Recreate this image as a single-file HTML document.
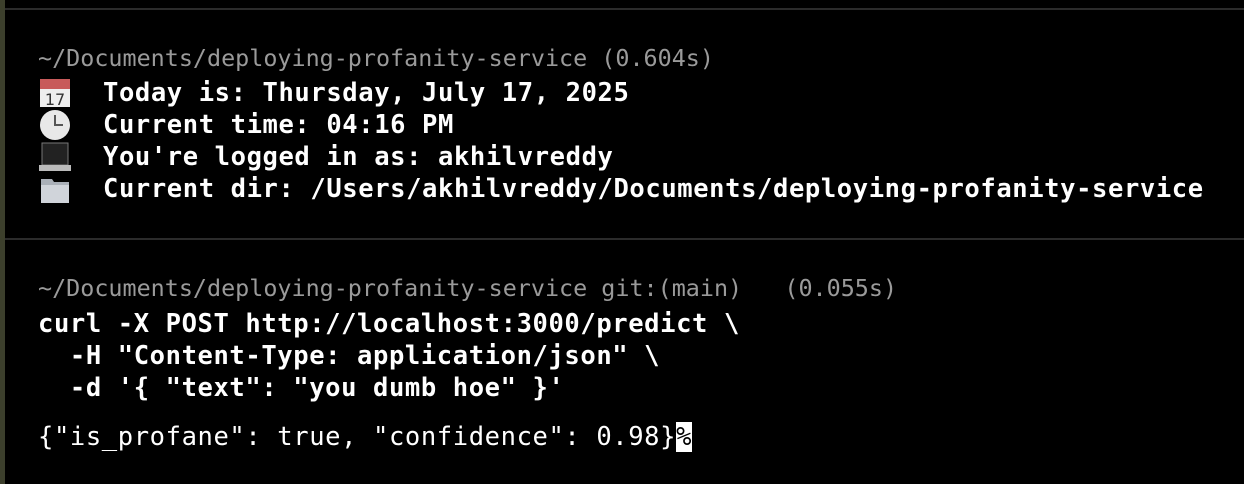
<!DOCTYPE html>
<html><head><style>
html,body{margin:0;padding:0;width:1244px;height:484px;background:#000;overflow:hidden}
.strip{position:absolute;left:0;top:0;width:5px;height:484px;background:#3c3f2c}
.hl{position:absolute;left:5px;right:0;height:2px;background:#2b2b2b}
.t{position:absolute;left:38px;font-family:"DejaVu Sans Mono","Liberation Mono",monospace;font-size:23.4px;line-height:32px;white-space:pre;color:#fff}
.w{font-size:25.5px;letter-spacing:0.6px}
.g{color:#9a9a9a}
.b{font-weight:bold}
.e{position:absolute;left:38px;width:34px;height:30px;font-size:26px;line-height:30px;text-align:center}
.cur{background:#fff;color:#000;letter-spacing:0;display:inline-block;width:16px;line-height:30px}
</style></head><body>
<div class="strip"></div>
<div class="hl" style="top:8px"></div>
<div class="hl" style="top:238px"></div>
<div class="t g" style="top:42px">~/Documents/deploying-profanity-service (0.604s)</div>
<div class="e" style="top:77px"><svg width="34" height="32"><rect x="2" y="2" width="30" height="28" fill="#eee"/><rect x="2" y="2" width="30" height="10" fill="#c85b5b"/><text x="17" y="28" font-family="DejaVu Sans" font-size="16" text-anchor="middle" fill="#333">17</text></svg></div>
<div class="e" style="top:109px"><svg width="34" height="32"><circle cx="17" cy="16" r="15" fill="#e8e8e8"/><path d="M17 6V16H25" stroke="#555" stroke-width="2" fill="none"/></svg></div>
<div class="e" style="top:141px"><svg width="34" height="32"><rect x="4" y="2" width="26" height="22" fill="#222" stroke="#777"/><rect x="1" y="24" width="32" height="6" fill="#bbb"/></svg></div>
<div class="e" style="top:173px"><svg width="34" height="32"><path d="M3 6H14L16 9H31V30H3Z" fill="#aab0b8"/><path d="M3 12H31V30H3Z" fill="#d0d4da"/></svg></div>
<div class="t b w" style="top:77px;left:103px">Today is: Thursday, July 17, 2025</div>
<div class="t b w" style="top:109px;left:103px">Current time: 04:16 PM</div>
<div class="t b w" style="top:141px;left:103px">You're logged in as: akhilvreddy</div>
<div class="t b w" style="top:173px;left:103px">Current dir: /Users/akhilvreddy/Documents/deploying-profanity-service</div>
<div class="t g" style="top:272px">~/Documents/deploying-profanity-service git:(main)   (0.055s)</div>
<div class="t b w" style="top:308px">curl -X POST http://localhost:3000/predict \
  -H "Content-Type: application/json" \
  -d '{ "text": "you dumb hoe" }'</div>
<div class="t w" style="top:421px">{"is_profane": true, "confidence": 0.98}<span class="cur">%</span></div>
</body></html>
